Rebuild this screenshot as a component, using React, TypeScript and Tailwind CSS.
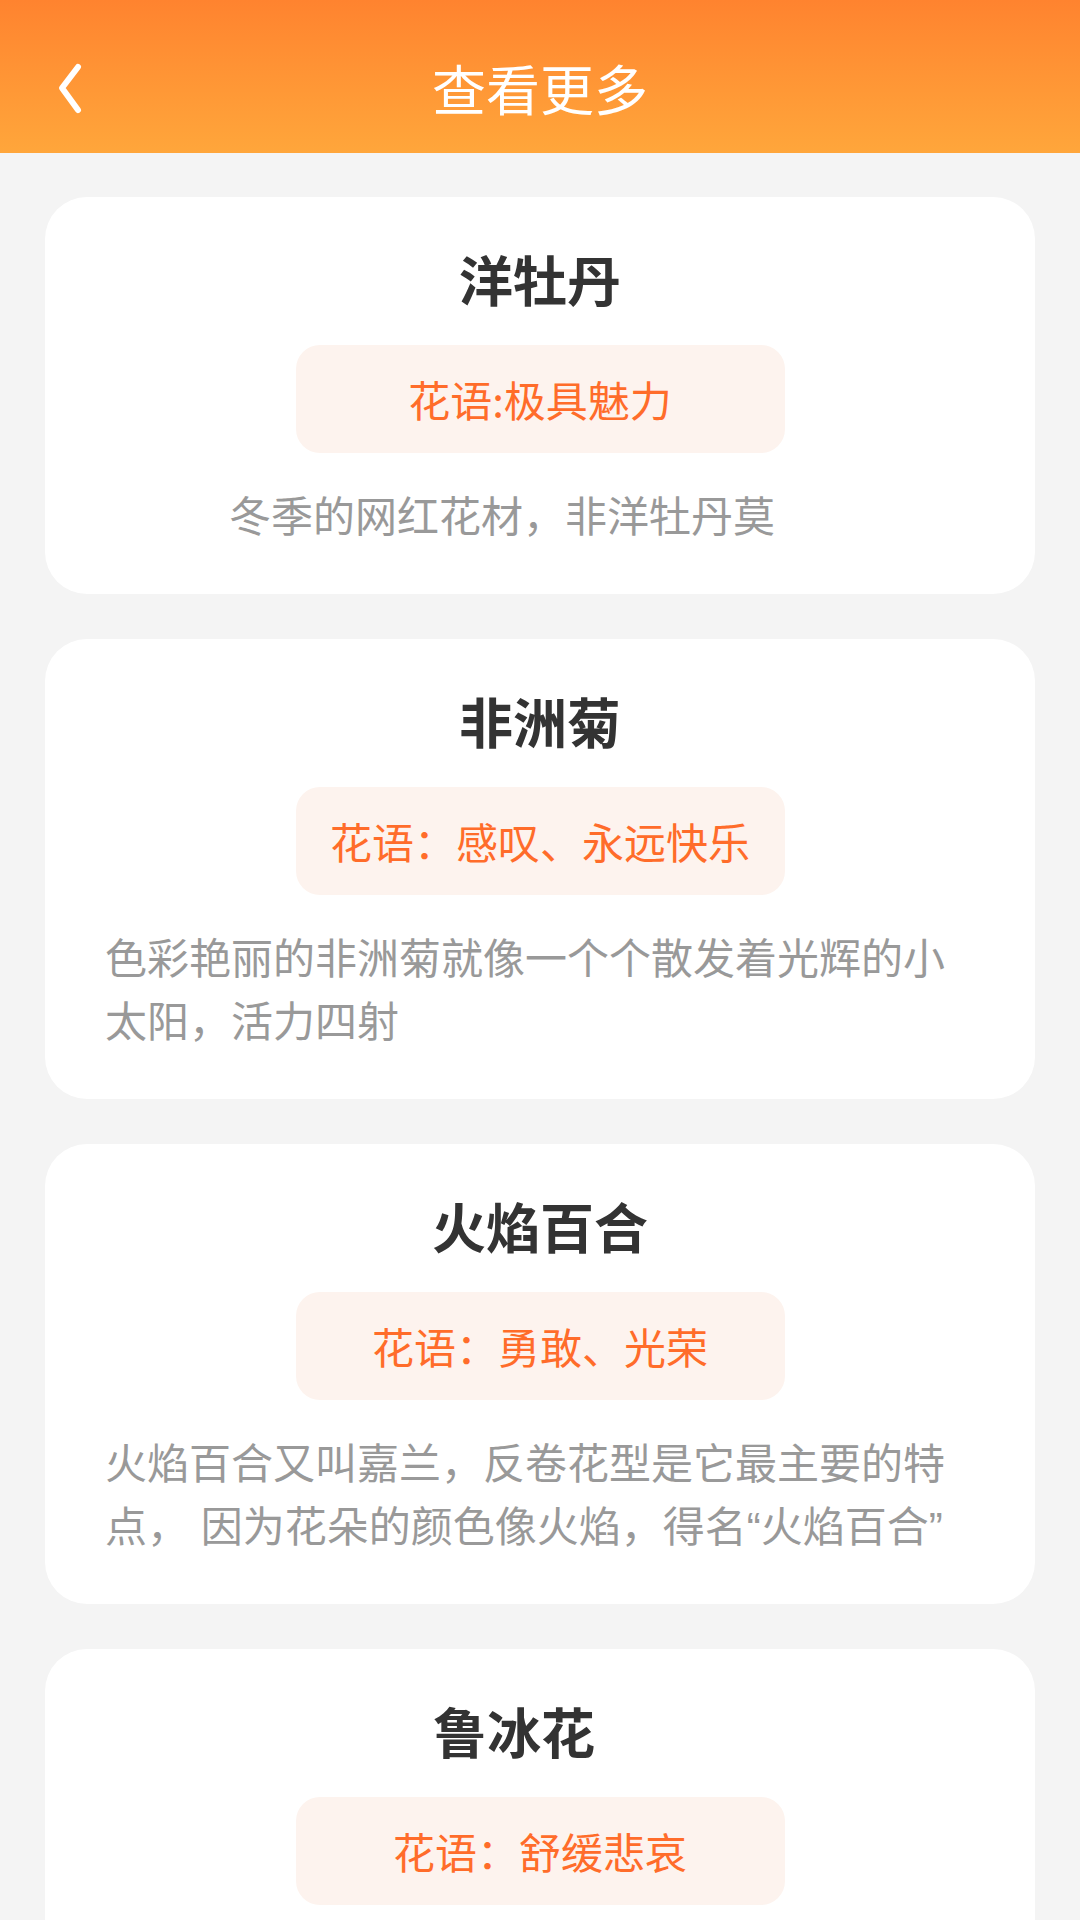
import React from "react";

type Flower = { name: string; lang: string; desc: string; extraPad?: boolean; titlePad?: boolean };

const flowers: Flower[] = [
  { name: "洋牡丹", lang: "花语:极具魅力", desc: "冬季的网红花材，非洋牡丹莫", extraPad: true },
  { name: "非洲菊", lang: "花语：感叹、永远快乐", desc: "色彩艳丽的非洲菊就像一个个散发着光辉的小太阳，活力四射" },
  { name: "火焰百合", lang: "花语：勇敢、光荣", desc: "火焰百合又叫嘉兰，反卷花型是它最主要的特点， 因为花朵的颜色像火焰，得名“火焰百合”" },
  { name: "鲁冰花", lang: "花语：舒缓悲哀", desc: "鲁冰花花穗挺拔，色彩丰富，寓意着母爱与思念", titlePad: true },
];

const font = { fontFamily: '"Noto Sans CJK SC", "Noto Sans", sans-serif' };
const latinFirst = { fontFamily: '"Liberation Sans", "Noto Sans CJK SC", sans-serif' };

function Card({ f }: { f: Flower }) {
  return (
    <div className="bg-white rounded-[42px] px-[60px] pt-[44px] pb-[45px] flex flex-col items-center">
      <div
        className={
          "text-[54px] leading-[76px] font-bold text-[#333333] " + (f.titlePad ? "pr-[52px]" : "")
        }
      >
        {f.name}
      </div>
      <div className="mt-[28px] w-[489px] h-[108px] rounded-[24px] bg-[#fdf3ee] flex items-center justify-center text-[42px] leading-none text-[#ff6c2a]">
        {f.lang}
      </div>
      <div className="mt-[33px] w-full text-center">
        <span
          className={
            "inline-block text-left text-[42px] leading-[63px] text-[#999999] " +
            (f.extraPad ? "pr-[76px]" : "")
          }
          style={latinFirst}
        >
          {f.desc}
        </span>
      </div>
    </div>
  );
}

export default function App() {
  return (
    <div className="w-[1080px] h-[1920px] overflow-hidden bg-[#f4f4f4]" style={font}>
      <div className="h-[153px] bg-gradient-to-b from-[#ff832f] to-[#ffa63b] relative flex items-center justify-center pt-[23px]">
        <svg
          className="absolute left-[54px] top-[60px]"
          width="32"
          height="56"
          viewBox="0 0 32 56"
          fill="none"
        >
          <polyline
            points="24,7 8,28 24,50"
            stroke="white"
            strokeWidth="6"
            strokeLinecap="round"
            strokeLinejoin="round"
          />
        </svg>
        <div className="text-white text-[54px] leading-none font-normal">查看更多</div>
      </div>
      <div className="px-[45px] pt-[44px] flex flex-col gap-[45px]">
        {flowers.map((f) => (
          <Card key={f.name} f={f} />
        ))}
      </div>
    </div>
  );
}
